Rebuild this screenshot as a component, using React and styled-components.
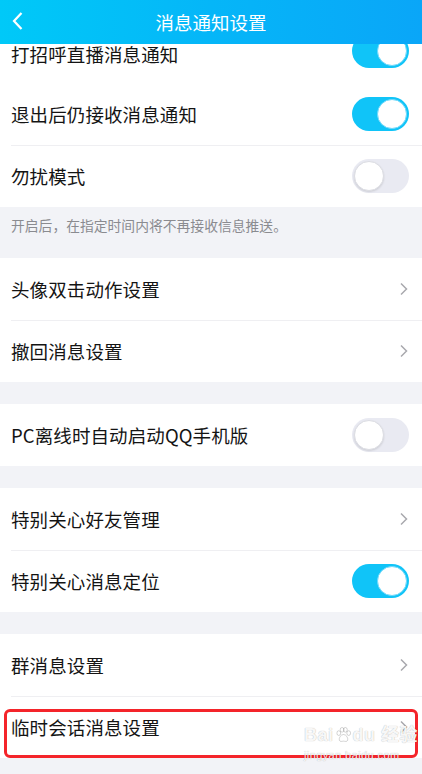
import styled, { createGlobalStyle } from "styled-components";

const GlobalStyle = createGlobalStyle`
  html, body {
    margin: 0;
    padding: 0;
    background: #f2f3f7;
  }
  * {
    box-sizing: border-box;
  }
`;

const Screen = styled.div`
  width: 422px;
  height: 774px;
  overflow: hidden;
  position: relative;
  background: #f2f3f7;
  font-family: "Noto Sans CJK SC", "Noto Sans", sans-serif;
  display: flex;
  flex-direction: column;
`;

const Header = styled.header`
  height: 44px;
  flex-shrink: 0;
  display: flex;
  align-items: center;
  justify-content: center;
  position: relative;
  z-index: 2;
  background: linear-gradient(90deg, #00c9f8 0%, #05b6f8 50%, #0aa6f8 100%);
  color: #fff;
  font-size: 18.5px;
`;

const BackButton = styled.button`
  position: absolute;
  left: 6px;
  top: 8px;
  width: 24px;
  height: 26px;
  border: none;
  background: none;
  padding: 0;
  display: flex;
  align-items: center;
  justify-content: center;
`;

const Scroller = styled.div`
  flex: 1;
  overflow: hidden;
  display: flex;
  flex-direction: column;
`;

const Group = styled.section`
  background: #fff;
  margin-bottom: ${(p) => (p.$gap ? "22px" : "0")};
`;

// $partial: the list is scrolled, only the lower part of the first row shows
const Row = styled.div`
  position: relative;
  height: ${(p) => (p.$partial ? "39px" : "62px")};
  display: flex;
  align-items: ${(p) => (p.$partial ? "flex-start" : "center")};
  justify-content: space-between;
  padding: 0 13px 0 11px;
  font-size: 18.5px;
  color: #141414;
  letter-spacing: 0.1px;
  & + &::before {
    content: "";
    position: absolute;
    left: 11px;
    right: 0;
    top: 0;
    height: 1px;
    background: #efeff2;
  }
`;

const Label = styled.span`
  line-height: 20px;
`;

const Highlight = styled.div`
  position: absolute;
  left: 4px;
  right: 4px;
  top: 13px;
  bottom: 0;
  border: 3px solid #f4242a;
  border-radius: 6px;
  pointer-events: none;
`;

const Track = styled.div`
  width: 57px;
  height: 34px;
  flex-shrink: 0;
  border-radius: 17px;
  margin-top: ${(p) => (p.$raised ? "-10px" : "0")};
  background: ${(p) => (p.$on ? "#10c4f8" : "#e9eaf2")};
  display: flex;
  align-items: center;
  justify-content: ${(p) => (p.$on ? "flex-end" : "flex-start")};
  padding: 2px;
`;

const Knob = styled.div`
  width: 30px;
  height: 30px;
  border-radius: 50%;
  background: #fff;
  border: 1px solid ${(p) => (p.$on ? "#6fd8fa" : "#dcdde3")};
  box-shadow: ${(p) => (p.$on ? "none" : "0 1px 2px rgba(0,0,0,0.12)")};
`;

const Note = styled.div`
  padding: 8px 11px 23px;
  font-size: 13.8px;
  line-height: 20px;
  color: #8a8b90;
`;

const Watermark = styled.div`
  position: absolute;
  left: 304px;
  top: 724px;
  z-index: 3;
  width: 110px;
  display: flex;
  flex-direction: column;
  align-items: flex-start;
  white-space: nowrap;
  pointer-events: none;
  color: rgba(255, 255, 255, 0.92);
  text-shadow: 0 0 1px rgba(0, 0, 0, 0.18), 0 0 1px rgba(0, 0, 0, 0.18);
  font-family: "Liberation Sans", "Noto Sans CJK SC", sans-serif;
`;

const MarkMain = styled.div`
  display: flex;
  align-items: center;
  font-size: 18px;
  font-weight: bold;
  letter-spacing: 0.5px;
  line-height: 22px;
`;

const MarkSub = styled.div`
  font-size: 11px;
  line-height: 13px;
  letter-spacing: 0.4px;
  margin-top: 3px;
`;

function Switch({ on, raised }) {
  return (
    <Track $on={on} $raised={raised}>
      <Knob $on={on} />
    </Track>
  );
}

function Chevron() {
  return (
    <svg width="10" height="14" viewBox="0 0 10 14">
      <path d="M2 1.5 L7.5 7 L2 12.5" fill="none" stroke="#a9a9ae" strokeWidth="1.5" />
    </svg>
  );
}

function Paw() {
  return (
    <svg width="17" height="18" viewBox="0 0 18 18" style={{ margin: "0 1px" }}>
      <g fill="none" stroke="rgba(0,0,0,0.18)" strokeWidth="1">
        <ellipse cx="4" cy="7" rx="2" ry="2.5" />
        <ellipse cx="7.5" cy="3.5" rx="2" ry="2.5" />
        <ellipse cx="11" cy="3.5" rx="2" ry="2.5" />
        <ellipse cx="14.5" cy="7" rx="2" ry="2.5" />
        <path d="M9 8.5 C6 8.5 4 12 4.5 14.5 C5 16.5 8 15.5 9 15.5 C10 15.5 13 16.5 13.5 14.5 C14 12 12 8.5 9 8.5 Z" />
      </g>
    </svg>
  );
}

function Item({ label, toggle, on, highlighted, partial }) {
  return (
    <Row $partial={partial}>
      <Label>{label}</Label>
      {toggle ? <Switch on={on} raised={partial} /> : <Chevron />}
      {highlighted && <Highlight />}
    </Row>
  );
}

export default function App() {
  return (
    <>
      <GlobalStyle />
      <Screen>
        <Header>
          <BackButton>
            <svg width="14" height="20" viewBox="0 0 14 20">
              <path d="M10.5 2 L3 10 L10.5 18" fill="none" stroke="#fff" strokeWidth="2.2" />
            </svg>
          </BackButton>
          消息通知设置
        </Header>
        <Scroller>
          <Group>
            <Item label="打招呼直播消息通知" toggle on partial />
            <Item label="退出后仍接收消息通知" toggle on />
            <Item label="勿扰模式" toggle on={false} />
          </Group>
          <Note>开启后，在指定时间内将不再接收信息推送。</Note>
          <Group $gap>
            <Item label="头像双击动作设置" />
            <Item label="撤回消息设置" />
          </Group>
          <Group $gap>
            <Item label="PC离线时自动启动QQ手机版" toggle on={false} />
          </Group>
          <Group $gap>
            <Item label="特别关心好友管理" />
            <Item label="特别关心消息定位" toggle on />
          </Group>
          <Group>
            <Item label="群消息设置" />
            <Item label="临时会话消息设置" highlighted />
          </Group>
        </Scroller>
        <Watermark>
          <MarkMain>
            Bai
            <Paw />
            du 经验
          </MarkMain>
          <MarkSub>jingyan.baidu.com</MarkSub>
        </Watermark>
      </Screen>
    </>
  );
}
